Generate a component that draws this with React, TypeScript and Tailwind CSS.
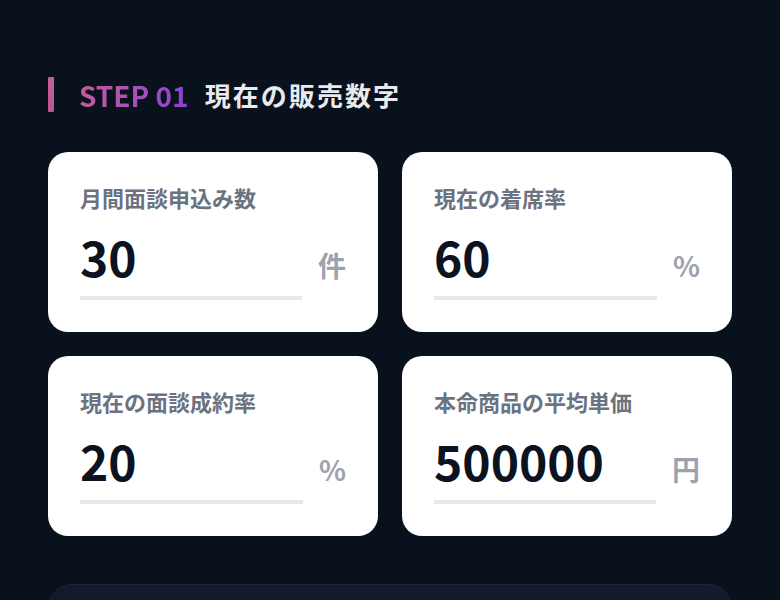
type Field = {
  label: string;
  value: string;
  unit: string;
};

const fields: Field[] = [
  { label: "月間面談申込み数", value: "30", unit: "件" },
  { label: "現在の着席率", value: "60", unit: "%" },
  { label: "現在の面談成約率", value: "20", unit: "%" },
  { label: "本命商品の平均単価", value: "500000", unit: "円" },
];

function FieldCard({ field }: { field: Field }) {
  return (
    <div className="rounded-[20px] bg-white px-8 pb-8 pt-[29px]">
      <p className="text-[22px] font-bold leading-[33px] text-[#6b7280]">{field.label}</p>
      <div className="mt-[18px] flex items-baseline gap-4">
        <div className="flex-1">
          <div className="text-[48px] font-bold leading-none text-[#0b1220]">{field.value}</div>
          <div className="mt-4 h-1 bg-[#e7e8ea]" />
        </div>
        <span className="text-[28px] font-bold leading-none text-[#9ca3af]">{field.unit}</span>
      </div>
    </div>
  );
}

export default function App() {
  return (
    <div
      className="min-h-screen bg-[#09111d] px-12 pt-[77px]"
      style={{ fontFamily: '"Noto Sans CJK JP", "Noto Sans", sans-serif' }}
    >
      {/* 見出し */}
      <div className="flex h-[35px] items-center">
        <div className="h-[35px] w-[6px] rounded-[1px] bg-gradient-to-b from-[#c85f97] to-[#b9578f]" />
        <span className="ml-[25px] bg-gradient-to-r from-[#c65a98] to-[#8a40d3] bg-clip-text text-[28px] font-bold leading-none text-transparent">
          STEP 01
        </span>
        <h2 className="ml-4 text-[26px] font-bold leading-none tracking-[0.08em] text-[#e8eaee]">
          現在の販売数字
        </h2>
      </div>

      <div className="mt-10 grid grid-cols-2 gap-6">
        {fields.map((f) => (
          <FieldCard key={f.label} field={f} />
        ))}
      </div>

      <div className="mt-12 h-[200px] rounded-3xl border border-[#1d2436] bg-[#121a2b]" />
    </div>
  );
}
